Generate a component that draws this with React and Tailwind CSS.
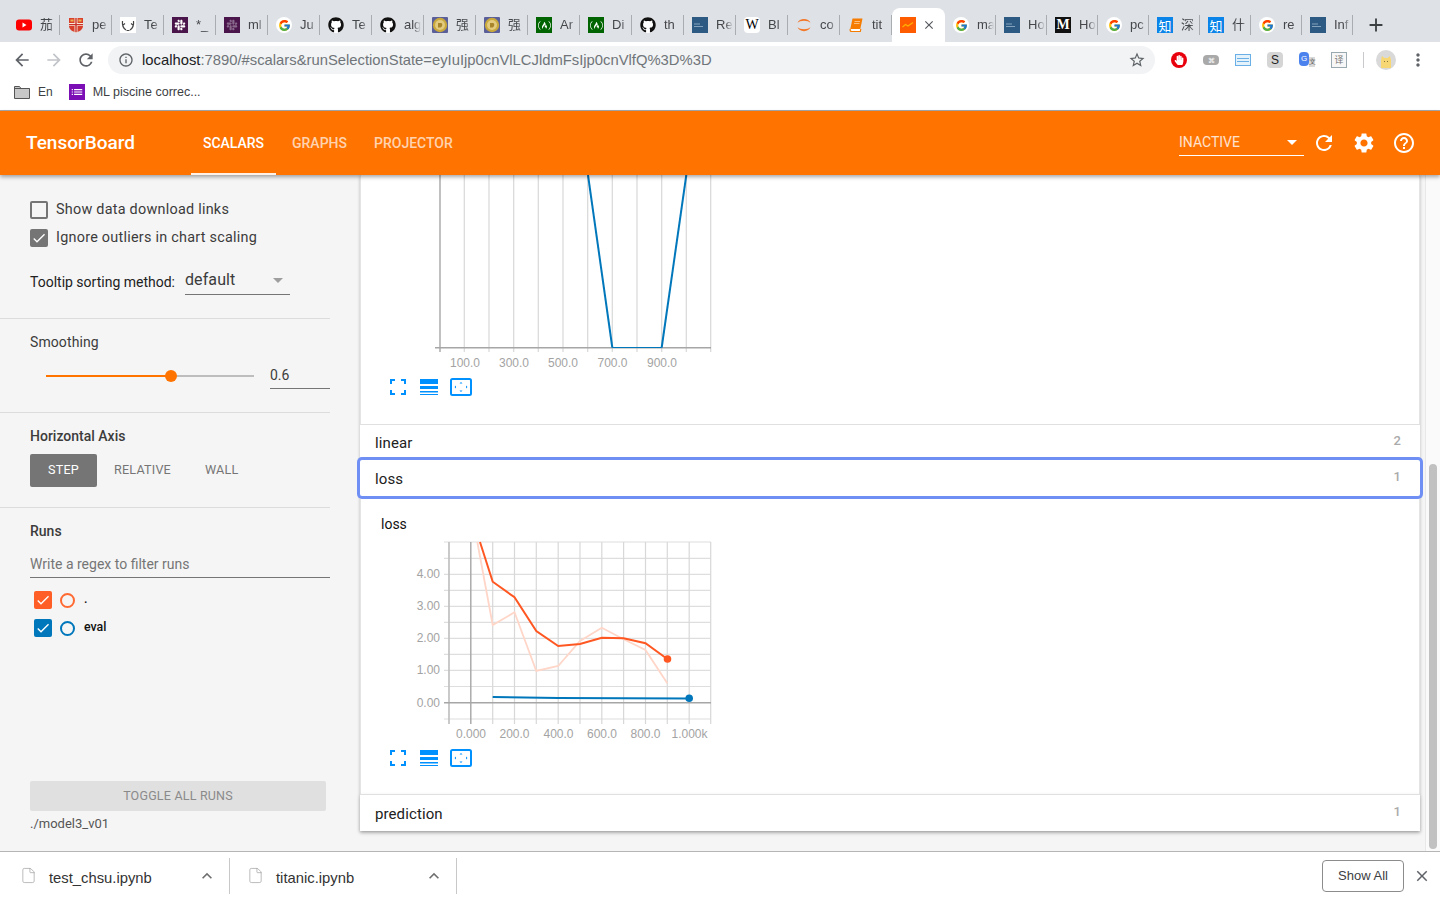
import React from 'react';
import {
  MdArrowBack, MdArrowForward, MdRefresh, MdInfoOutline, MdStarBorder, MdMoreVert, MdAdd, MdClose,
  MdSettings, MdHelpOutline, MdExpandLess, MdCheck, MdList,
} from 'react-icons/md';
import { FaGithub, FaFreeCodeCamp, FaHandPaper, FaSlack } from 'react-icons/fa';
import { FcGoogle } from 'react-icons/fc';
import { File } from 'lucide-react';

const roboto = "font-['Roboto',sans-serif]";

// favicons of the tab strip
const Favicon = ({ kind }) => {
  switch (kind) {
    case 'yt':
      return (
        <svg width="16" height="16" viewBox="0 0 16 16">
          <rect x="0" y="2.5" width="16" height="11" rx="3" fill="#f00" />
          <path d="M6.5 5.5v5l4-2.5z" fill="#fff" />
        </svg>
      );
    case 'shield':
      return (
        <svg width="16" height="16" viewBox="0 0 16 16">
          <path d="M1 1h14v8c0 3.500-3.500 5.500-7 6.500-3.500-1-7-3-7-6.500z" fill="#d8402c" />
          <path d="M6.500 1h3v14.500h-3zM1 6h14v3H1z" fill="#f3ead8" />
          <path d="M7.300 1h1.400v14H7.300zM1 7h14v1.200H1z" fill="#c9302a" />
          <path d="M2.500 2.500h3v2h-3zM10.500 2.500h3v2h-3z" fill="#e9b44c" />
        </svg>
      );
    case 'antler':
      return (
        <div className="w-4 h-4 bg-white flex items-center justify-center">
          <svg width="14" height="14" viewBox="0 0 14 14" fill="none" stroke="#444" strokeWidth="1.200">
            <path d="M5 12C2 10 1 7 1.500 3M2 7l2-1.500M9 12c3-2 4-5 3.500-9M12 7l-2-1.500M5.500 12.500h3" />
          </svg>
        </div>
      );
    case 'slack':
      return (
        <div className="w-4 h-4 bg-[#4a154b] flex items-center justify-center">
          <FaSlack size={12} color="#ffffff" />
        </div>
      );
    case 'slackdim':
      return (
        <div className="w-4 h-4 bg-[#4a154b] flex items-center justify-center">
          <FaSlack size={12} color="#8a6a8c" />
        </div>
      );
    case 'google':
      return (
        <div className="w-4 h-4 bg-white rounded-full flex items-center justify-center">
          <FcGoogle size={13} />
        </div>
      );
    case 'github':
      return (
        <div className="w-4 h-4 bg-white rounded-full flex items-center justify-center">
          <FaGithub size={16} color="#111" />
        </div>
      );
    case 'doge':
      return (
        <svg width="16" height="16" viewBox="0 0 16 16">
          <rect width="16" height="16" rx="1" fill="#5a5f9a" />
          <circle cx="8" cy="8" r="7.200" fill="#c9a83c" />
          <circle cx="8" cy="8" r="5" fill="#e2cb7e" />
          <path d="M6 6h3c1.500 0 2 3-.5 4.500H6z" fill="#a8842a" />
        </svg>
      );
    case 'fcc':
      return (
        <div className="w-4 h-4 bg-[#006400] flex items-center justify-center">
          <FaFreeCodeCamp size={13} color="#ffffff" />
        </div>
      );
    case 'blue':
      return (
        <svg width="16" height="16" viewBox="0 0 16 16">
          <rect width="16" height="16" fill="#2c5a83" />
          <path d="M2 7h6M2 9.500h9" stroke="#9cb6cc" strokeWidth="0.800" />
        </svg>
      );
    case 'wiki':
      return (
        <div className="w-4 h-4 bg-white rounded-sm flex items-center justify-center text-[14px] leading-none text-black font-['Liberation_Serif',serif]">W</div>
      );
    case 'jupyter':
      return (
        <svg width="16" height="16" viewBox="0 0 16 16" fill="#f37726">
          <path d="M1.500 6C3 .500 13 .500 14.500 6 12 3 4 3 1.500 6zM1.500 10C3 15.500 13 15.500 14.500 10 12 13 4 13 1.500 10z" />
        </svg>
      );
    case 'book':
      return (
        <svg width="16" height="16" viewBox="0 0 16 16">
          <path d="M4.500 1.500h10L12.300 12H2.300z" fill="#f57c00" />
          <path d="M2.300 12c-.6 2 .4 2.500 1.500 2.500h8.500l.5-2.500" fill="#fff" stroke="#f57c00" strokeWidth="1.200" />
          <path d="M6.500 4.500h5.500M6 6.500h5.500" stroke="#ffd19a" strokeWidth="0.800" />
        </svg>
      );
    case 'medium':
      return (
        <div className="w-4 h-4 bg-[#111] flex items-center justify-center text-[14px] leading-none font-bold text-white font-['Liberation_Serif',serif]">M</div>
      );
    case 'zhihu':
      return (
        <div className="w-4 h-4 bg-[#0a84e8] flex items-center justify-center text-[13px] leading-none text-white font-['Noto_Sans_CJK_SC',sans-serif]">知</div>
      );
    case 'tb':
      return (
        <svg width="16" height="16" viewBox="0 0 16 16">
          <rect width="16" height="16" fill="#ff5c00" />
          <path d="M2.500 10l3-2.500 2.500 1.500 5-3.500" stroke="#ffb300" strokeWidth="1.200" fill="none" />
        </svg>
      );
    default:
      return null;
  }
};

const leftTabs = [
  ['yt', '茄'], ['shield', 'pe'], ['antler', 'Te'], ['slack', '*_'], ['slackdim', 'ml'], ['google', 'Ju'],
  ['github', 'Te'], ['github', 'alg'], ['doge', '强'], ['doge', '强'], ['fcc', 'Ar'], ['fcc', 'Di'],
  ['github', 'th'], ['blue', 'Re'], ['wiki', 'Bl'], ['jupyter', 'co'], ['book', 'tit'],
];
const rightTabs = [
  ['google', 'ma'], ['blue', 'Ho'], ['medium', 'Ho'], ['google', 'pc'], ['zhihu', '深'], ['zhihu', '什'],
  ['google', 're'], ['blue', 'Inf'],
];

const Tab = ({ icon, label, wide }) => (
  <div className={`${wide ? 'w-[51px]' : 'w-[52px]'} h-[20px] shrink-0 flex items-center pl-2 border-r border-[#a9acb0]`}>
    <div className="w-4 h-4 shrink-0 flex items-center justify-center">
      <Favicon kind={icon} />
    </div>
    <span className="ml-2 w-[17px] overflow-hidden whitespace-nowrap text-[13px] leading-4 text-[#45474a] font-['Liberation_Sans','Noto_Sans_CJK_SC',sans-serif] [mask-image:linear-gradient(to_right,black_55%,transparent)]">
      {label}
    </span>
  </div>
);

const BrowserChrome = () => (
  <div className="shrink-0 font-['Liberation_Sans',sans-serif]">
    <div className="h-[42px] bg-[#dee1e6] flex items-end pl-2">
      <div className="flex items-center h-[27px] pb-[7px]">
        {leftTabs.map(([i, l], n) => <Tab key={n} icon={i} label={l} />)}
      </div>
      <div className="w-[53px] h-[34px] shrink-0 bg-white rounded-t-lg flex items-center pl-2">
        <Favicon kind="tb" />
        <MdClose size={14} color="#55585c" className="ml-[6px]" />
      </div>
      <div className="flex items-center h-[27px] pb-[7px]">
        {rightTabs.map(([i, l], n) => <Tab key={n} icon={i} label={l} wide />)}
      </div>
      <div className="h-[34px] flex items-center ml-[12px]">
        <MdAdd size={22} color="#3c4043" />
      </div>
    </div>
    <div className="h-[36px] bg-white flex items-center pl-[12px] pr-[12px]">
      <MdArrowBack size={20} color="#5f6368" />
      <MdArrowForward size={20} color="#c1c4c8" className="ml-3" />
      <MdRefresh size={20} color="#5f6368" className="ml-3" />
      <div className="ml-3 w-[1047px] h-[28px] rounded-full bg-[#f1f3f4] flex items-center pl-[10px] pr-[9px]">
        <MdInfoOutline size={16} color="#5f6368" />
        <span className="ml-[8px] pt-[1px] text-[14.8px] text-[#202124] whitespace-nowrap">
          localhost<span className="text-[#70757a]">:7890/#scalars&amp;runSelectionState=eyIuIjp0cnVlLCJldmFsIjp0cnVlfQ%3D%3D</span>
        </span>
        <MdStarBorder size={18} color="#5f6368" className="ml-auto" />
      </div>
      <div className="flex items-center ml-[16px] gap-[16px]">
        <div className="w-4 h-4 rounded-full bg-[#e8000d] flex items-center justify-center">
          <FaHandPaper size={10} color="#fff" />
        </div>
        <div className="w-4 h-[10px] rounded-sm bg-[#a9a9a9] flex items-center justify-center text-[7px] leading-none text-white">⌘</div>
        <div className="w-4 h-3 border border-[#6aafe6] bg-[#e4f2fc] flex flex-col justify-center gap-[2px] px-[1px]">
          <div className="h-[1px] bg-[#6aafe6]" />
          <div className="h-[1px] bg-[#6aafe6]" />
        </div>
        <div className="w-4 h-4 rounded bg-[#d5d5d5] flex items-center justify-center text-[12px] leading-none text-[#222]">S</div>
        <div className="w-4 h-4 flex">
          <div className="w-[10px] h-[14px] bg-[#4c82ee] rounded-sm text-[8px] leading-[14px] text-white text-center">G</div>
          <div className="w-[6px] h-[10px] mt-[5px] bg-[#d9d9d9] text-[7px] leading-[10px] text-[#555]">文</div>
        </div>
        <div className="w-4 h-4 border border-[#9aa8b0] bg-[#f7f7f7] text-[9px] leading-[14px] text-center text-[#777] font-['Noto_Sans_CJK_SC',sans-serif]">译</div>
      </div>
      <div className="ml-[16px] w-[1px] h-4 bg-[#c7c9cc]" />
      <div className="ml-3 w-5 h-5 rounded-full bg-[#d9d9d9] overflow-hidden">
        <svg width="20" height="20" viewBox="0 0 20 20">
          <path d="M5 18v-8l1-4 2.500 2h3L14 6l1 4v8z" fill="#f7d774" />
          <path d="M8 11.500h.8M11.200 11.500h.8" stroke="#6b5a2a" strokeWidth="1" />
        </svg>
      </div>
      <MdMoreVert size={20} color="#5f6368" className="ml-3" />
    </div>
    <div className="h-[33px] bg-white border-b border-[#a8a8a8] flex items-center pb-1 pl-[14px] text-[12.5px] text-[#3c4043]">
      <svg width="16" height="14" viewBox="0 0 16 14">
        <path d="M.5 1.500h5l1.500 2h8.500v10H.5z" fill="#c8c8c8" stroke="#555" />
        <path d="M.5 3.500h15" stroke="#555" />
      </svg>
      <span className="ml-2 text-[12px]">En</span>
      <div className="ml-4 w-4 h-4 bg-[#7b0fb5] flex items-center justify-center">
        <MdList size={14} color="#fff" />
      </div>
      <span className="ml-2">ML piscine correc...</span>
    </div>
  </div>
);

const TopNav = () => (
  <header className={`relative z-20 shrink-0 h-[64px] bg-[#ff7300] flex items-center shadow-[0_2px_4px_rgba(0,0,0,0.35)] text-white ${roboto}`}>
    <div className="ml-[26px] w-[165px] pt-[1px] text-[19px] font-medium">TensorBoard</div>
    <div className="flex h-full text-[14px] font-medium">
      <div className="w-[85px] pt-[2px] flex items-center justify-center border-b-2 border-white/90">SCALARS</div>
      <div className="ml-[16px] flex items-center text-white/70">GRAPHS</div>
      <div className="ml-[27px] flex items-center text-white/70">PROJECTOR</div>
    </div>
    <div className="ml-auto flex items-center">
      <div className="w-[125px] h-[27px] pt-[2px] border-b border-white flex items-center justify-between pr-[7px] text-[14px] text-white/80 mt-[-2px]">
        <span>INACTIVE</span>
        <div className="w-0 h-0 border-x-[5px] border-x-transparent border-t-[5px] border-t-white" />
      </div>
      <MdRefresh size={24} color="#fff" className="ml-[8px]" />
      <MdSettings size={24} color="#fff" className="ml-[16px]" />
      <MdHelpOutline size={24} color="#fff" className="ml-[16px] mr-[24px]" />
    </div>
  </header>
);

const Check = ({ checked, color }) => (
  <div className={`w-[18px] h-[18px] shrink-0 rounded-[2px] flex items-center justify-center ${checked ? color : 'border-2 border-[#757575]'}`}>
    {checked && <MdCheck size={16} color="#fff" />}
  </div>
);

const Divider = () => <div className="h-[1px] w-[330px] bg-[#dcdcdc] shrink-0" />;

const RunRow = ({ color, ring, label }) => (
  <div className="flex items-center h-[18px] pl-1">
    <Check checked color={color} />
    <div className={`ml-2 w-[15px] h-[15px] rounded-full border-2 bg-transparent ${ring}`} />
    <span className="ml-[9px] -mt-[2px] text-[12.4px] font-medium text-[#111]">{label}</span>
  </div>
);

const Sidebar = () => (
  <aside className={`w-[340px] shrink-0 h-full flex flex-col text-[14px] ${roboto}`}>
    <div className="h-[143px] pl-[30px] pt-[25px] shrink-0">
      <div className="flex items-center gap-2 h-5 text-[14.4px] leading-5 text-[#3c3c3c] tracking-[0.25px]"><Check /><span>Show data download links</span></div>
      <div className="flex items-center gap-2 h-5 text-[14.4px] leading-5 text-[#3c3c3c] tracking-[0.25px] mt-2"><Check checked color="bg-[#757575]" /><span>Ignore outliers in chart scaling</span></div>
      <div className="flex items-start mt-[17px]">
        <span className="text-[#212121] mt-[7px] leading-5">Tooltip sorting method:</span>
        <div className="ml-[10px] w-[105px] h-[30px] pt-[1px] border-b border-[#757575] flex items-center justify-between pr-[7px] text-[16px] text-[#3c3c3c] tracking-[0.1px]">
          <span>default</span>
          <div className="w-0 h-0 border-x-[5px] border-x-transparent border-t-[5px] border-t-[#9e9e9e]" />
        </div>
      </div>
    </div>
    <Divider />
    <div className="h-[93px] pl-[30px] pt-[13px] shrink-0">
      <div className="leading-5 text-[#3c3c3c] tracking-[0.1px]">Smoothing</div>
      <div className="flex items-start mt-[10px]">
        <div className="ml-4 w-[208px] h-[27px] flex items-center">
          <div className="w-[125px] h-[2px] bg-[#ff7300]" />
          <div className="w-3 h-3 rounded-full bg-[#ff7300] -ml-[6px] shrink-0" />
          <div className="w-[77px] h-[2px] bg-[#bdbdbd]" />
        </div>
        <div className="ml-4 w-[60px] h-[27px] border-b border-[#757575] text-[#3c3c3c] leading-[27px]">0.6</div>
      </div>
    </div>
    <Divider />
    <div className="h-[94px] pl-[30px] pt-[13px] shrink-0">
      <div className="leading-5 font-medium text-[#3c3c3c]">Horizontal Axis</div>
      <div className="flex items-center mt-2 text-[12.6px] tracking-[0.2px] text-[#757575]">
        <div className="w-[67px] h-[33px] rounded-[2px] bg-[#757575] text-white flex items-center justify-center">STEP</div>
        <span className="ml-[17px]">RELATIVE</span>
        <span className="ml-[34px]">WALL</span>
      </div>
    </div>
    <Divider />
    <div className="flex-1 pl-[30px] pt-[13px] flex flex-col">
      <div className="leading-5 font-medium text-[#3c3c3c]">Runs</div>
      <div className="w-[300px] h-[27px] mt-[10px] border-b border-[#757575] text-[#757575] leading-[26px]">Write a regex to filter runs</div>
      <div className="mt-[13px] flex flex-col gap-[10px]">
        <RunRow color="bg-[#ff5f26]" ring="border-[#ff6a33]" label="." />
        <RunRow color="bg-[#0077bb]" ring="border-[#0077bb]" label="eval" />
      </div>
      <div className="mt-auto mb-[19px]">
        <div className="w-[296px] h-[30px] rounded-[2px] bg-[#e0e0e0] flex items-center justify-center text-[12.5px] text-[#8a8a8a] tracking-[0.2px]">TOGGLE ALL RUNS</div>
        <div className="mt-[5px] text-[13px] leading-[16px] text-[#555]">./model3_v01</div>
      </div>
    </div>
  </aside>
);

const ChartTools = () => (
  <div className="flex items-center pl-[29px] text-[#0091ff]">
    <svg width="16" height="16" viewBox="0 0 16 16" fill="none" stroke="currentColor" strokeWidth="2">
      <path d="M1 5V1h4M11 1h4v4M15 11v4h-4M5 15H1v-4" />
    </svg>
    <svg width="18" height="16" viewBox="0 0 18 16" className="ml-[14px]" fill="currentColor">
      <path d="M0 0h18v5H0zM0 7h18v3H0zM0 12h18v1.500H0zM0 15h18v1H0z" />
    </svg>
    <svg width="22" height="18" viewBox="0 0 22 18" className="ml-3" fill="none">
      <rect x="1" y="1" width="20" height="16" rx="1.500" stroke="currentColor" strokeWidth="2" />
      <path d="M11 4l-1.500 1.500h3zM11 14l-1.500-1.500h3zM4.500 9l1.500-1.500v3zM17.500 9L16 7.500v3z" fill="currentColor" />
    </svg>
  </div>
);

const axisFont = { fontFamily: '"Liberation Sans", sans-serif', fontSize: 12, fill: '#a3a3a3' };

const TopChart = () => {
  const xs = [464.3, 489, 513.7, 538.3, 563, 587.7, 612.3, 637, 661.7, 686.3, 710.7];
  return (
    <svg width="360" height="197" viewBox="361 175 360 197" className="block">
      {xs.map((x) => <line key={x} x1={x} x2={x} y1="175" y2="352" stroke="#d8d8d8" strokeWidth="1.200" />)}
      <line x1="440" x2="440" y1="175" y2="352" stroke="#a6a6a6" strokeWidth="1.400" />
      <line x1="435" x2="711" y1="347.700" y2="347.700" stroke="#a6a6a6" strokeWidth="1.600" />
      <path d="M588 175L612.300 347.500" stroke="#0077bb" strokeWidth="2" fill="none" />
      <path d="M612.300 347.500H661.700" stroke="#0077bb" strokeWidth="1" fill="none" />
      <path d="M661.700 347.500L686.300 175" stroke="#0077bb" strokeWidth="2" fill="none" />
      {[['100.0', 465], ['300.0', 514], ['500.0', 563], ['700.0', 612.500], ['900.0', 662]].map(([t, x]) => (
        <text key={t} x={x} y="367" textAnchor="middle" style={axisFont}>{t}</text>
      ))}
    </svg>
  );
};

const LossChart = () => {
  const xs = [449, 492.700, 514.500, 536.300, 558.200, 580, 601.800, 623.600, 645.500, 667.300, 689.200, 710.700];
  const ys = [542, 558.300, 574.300, 590.400, 606.400, 622.400, 638.400, 654.400, 670.400, 686.500, 719];
  return (
    <svg width="360" height="205" viewBox="361 536 360 205" className="block">
      {ys.map((y) => <line key={y} x1="444" x2="711" y1={y} y2={y} stroke="#dedede" strokeWidth="1.200" />)}
      {xs.map((x) => <line key={x} x1={x} x2={x} y1="542" y2="724" stroke="#d8d8d8" strokeWidth="1.200" />)}
      <line x1="449" x2="449" y1="542" y2="724" stroke="#bdbdbd" strokeWidth="1.400" />
      <line x1="470.800" x2="470.800" y1="542" y2="724" stroke="#a6a6a6" strokeWidth="1.400" />
      <line x1="444" x2="711" y1="702.700" y2="702.700" stroke="#a6a6a6" strokeWidth="1.400" />
      <polyline
        points="477.300,542 492.700,625 514.500,612.300 536.300,671 558.200,666 580,641 601.800,627.700 623.600,639.300 645.500,650 667.300,683.300"
        fill="none" stroke="#ffd6c8" strokeWidth="1.800"
      />
      <polyline
        points="480,542 492.700,581.700 514.500,597.300 536.300,631 558.200,646 580,644 601.800,637.700 623.600,638.300 645.500,643.300 667.300,659"
        fill="none" stroke="#ff5722" strokeWidth="2"
      />
      <circle cx="667.500" cy="659" r="3.800" fill="#ff5722" />
      <polyline points="492.700,697 558.200,698 689.200,698.400" fill="none" stroke="#0077bb" strokeWidth="2" />
      <circle cx="689.200" cy="698.300" r="3.800" fill="#0077bb" />
      {[['4.00', 578], ['3.00', 610], ['2.00', 642], ['1.00', 674], ['0.00', 707]].map(([t, y]) => (
        <text key={t} x="440" y={y} textAnchor="end" style={axisFont}>{t}</text>
      ))}
      {[['0.000', 471], ['200.0', 514.500], ['400.0', 558.500], ['600.0', 602], ['800.0', 645.500], ['1.000k', 689.500]].map(([t, x]) => (
        <text key={t} x={x} y="738" textAnchor="middle" style={axisFont}>{t}</text>
      ))}
    </svg>
  );
};

const GroupRow = ({ name, count, className = '' }) => (
  <div className={`bg-white flex items-center justify-between pl-[15px] pr-[19px] shrink-0 ${className}`}>
    <span className="mt-[2px] text-[15px] text-[#212121] tracking-[0.1px]">{name}</span>
    <span className="text-[13px] font-medium text-[#aaa] mb-[2px]">{count}</span>
  </div>
);

const Main = () => (
  <main className={`relative flex-1 h-full pl-[20px] overflow-hidden ${roboto}`}>
    <div className="w-[1060px] flex flex-col shadow-[0_1px_3px_rgba(0,0,0,0.25)]">
      <div className="h-[249px] bg-white border-x border-[#e4e4e4] shrink-0">
        <TopChart />
        <div className="mt-[6px]"><ChartTools /></div>
      </div>
      <GroupRow name="linear" count="2" className="h-[36px] border-t border-[#e0e0e0] pb-[1px]" />
      <GroupRow name="loss" count="1" className="relative z-10 h-[36px] rounded-[2px] ring-[3px] ring-[#6f8ff5]" />
      <div className="h-[298px] bg-white border-x border-[#e4e4e4] shrink-0">
        <div className="pl-[20px] pt-[20px] mb-1 text-[14px] leading-4 text-[#111]">loss</div>
        <LossChart />
        <div className="mt-[8px]"><ChartTools /></div>
      </div>
      <GroupRow name="prediction" count="1" className="h-[37px] border-t border-[#e0e0e0] shadow-[0_2px_4px_rgba(0,0,0,0.18)]" />
    </div>
    {/* page scrollbar */}
    <div className="absolute right-0 top-0 bottom-0 w-[15px] bg-[#fafafa] border-l border-[#e8e8e8]">
      <div className="absolute left-[3px] right-[3px] top-[289px] bottom-[2px] rounded-full bg-[#c1c1c1]" />
    </div>
  </main>
);

const DownloadItem = ({ name, width, inset }) => (
  <div className={`${width} h-[36px] flex items-center border-r border-[#c8c8c8] shrink-0`}>
    <File size={17} strokeWidth={1} color="#9e9e9e" className={`${inset} -mt-[2px]`} />
    <span className="ml-[12px] mt-[5px] text-[14.8px] text-[#333]">{name}</span>
    <MdExpandLess size={20} color="#6f6f6f" className="ml-auto mr-[12px]" />
  </div>
);

const DownloadBar = () => (
  <div className="shrink-0 h-[49px] bg-white border-t border-[#b5b5b5] flex items-center font-['Liberation_Sans',sans-serif]">
    <DownloadItem name="test_chsu.ipynb" width="w-[230px]" inset="ml-[20px]" />
    <DownloadItem name="titanic.ipynb" width="w-[227px]" inset="ml-[17px]" />
    <div className="ml-auto w-[82px] h-[32px] rounded border border-[#8c8c8c] flex items-center justify-center text-[13px] font-medium text-[#3c4043]">Show All</div>
    <MdClose size={18} color="#5f6368" className="ml-[9px] mr-[9px]" />
  </div>
);

export default function App() {
  return (
    <div className="w-[1440px] h-[900px] overflow-hidden flex flex-col bg-[#f5f5f5]">
      <BrowserChrome />
      <TopNav />
      <div className="flex-1 min-h-0 flex">
        <Sidebar />
        <Main />
      </div>
      <DownloadBar />
    </div>
  );
}
